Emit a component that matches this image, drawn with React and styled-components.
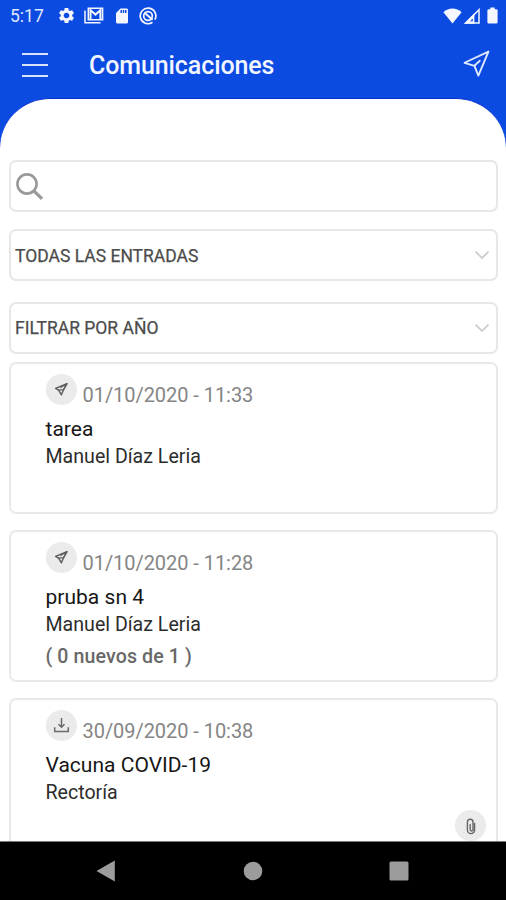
import styled, { createGlobalStyle } from "styled-components";
import { MdSettings, MdSdCard } from "react-icons/md";


const GlobalStyle = createGlobalStyle`
    * {
        box-sizing: border-box;
        margin: 0;
        padding: 0;
    }

    body {
        font-family: Roboto, "Liberation Sans", sans-serif;
        background-color: #fff;
    }

    svg {
        display: block;
        flex-shrink: 0;
    }
`;

const Screen = styled.div`
    width: 506px;
    height: 900px;
    display: flex;
    flex-direction: column;
    overflow: hidden;
    background-color: #0c4be2;
`;

const StatusBar = styled.div`
    height: 31px;
    display: flex;
    align-items: center;
    justify-content: space-between;
    padding: 0 8px 0 10px;
    color: #f4f7ff;
`;

const StatusGroup = styled.div`
    display: flex;
    align-items: center;
    gap: ${props => props.$gap};
`;

const Clock = styled.span`
    width: 38px;
    font-size: 17.5px;
    line-height: 32px;
    color: #dfe8ff;
`;

const Header = styled.header`
    height: 67px;
    display: flex;
    align-items: center;
    padding: 0 16px 0 22px;
`;

const MenuButton = styled.button`
    width: 26px;
    height: 24px;
    display: flex;
    flex-direction: column;
    justify-content: space-between;
    margin-top: 1px;
    border: none;
    background: none;
    cursor: pointer;
`;

const MenuLine = styled.span`
    width: 26px;
    height: 2px;
    background-color: #d8e2fb;
`;

const Title = styled.h1`
    flex: 1;
    margin-left: 41px;
    padding-top: 3px;
    font-size: 25px;
    font-weight: 500;
    line-height: 32px;
    letter-spacing: -0.1px;
    color: #f1f5ff;
`;

const SendButton = styled.button`
    display: flex;
    margin-top: -2px;
    border: none;
    background: none;
    cursor: pointer;
`;

const Sheet = styled.main`
    flex: 1;
    min-height: 0;
    overflow: hidden;
    display: flex;
    flex-direction: column;
    padding: 61px 8px 0 9px;
    border-top: 1px solid #0a2fd0;
    border-radius: 50px 50px 0 0;
    background-color: #fff;
`;

const Field = styled.div`
    flex-shrink: 0;
    height: 52px;
    display: flex;
    align-items: center;
    justify-content: space-between;
    margin-bottom: ${props => props.$space};
    padding: 0 6px 0 4px;
    border: 2px solid #e7e7e7;
    border-radius: 7px;
`;

const FieldLabel = styled.span`
    padding-top: 1px;
    font-size: 17.5px;
    color: #4c4c4c;
    -webkit-text-stroke: 0.25px #4c4c4c;
`;

const Card = styled.article`
    flex-shrink: 0;
    height: 152px;
    display: flex;
    flex-direction: column;
    margin-bottom: 16px;
    padding: 10px 10px 0 34.5px;
    border: 2px solid #e9e9e9;
    border-radius: 7px;
`;

const CardTop = styled.div`
    display: flex;
    gap: 6px;
    height: 40.5px;
`;

const IconCircle = styled.span`
    width: 31px;
    height: 31px;
    display: flex;
    align-items: center;
    justify-content: center;
    flex-shrink: 0;
    border-radius: 50%;
    background-color: #ebebeb;
`;

const CardDate = styled.time`
    padding-top: 6.5px;
    font-size: 20px;
    line-height: 28px;
    letter-spacing: -0.05px;
    color: #858585;
`;

const Subject = styled.h2`
    font-size: 21px;
    font-weight: 400;
    line-height: 28px;
    letter-spacing: 0.02px;
    color: #161616;
`;

const Sender = styled.p`
    font-size: 19.6px;
    line-height: 27.5px;
    color: #2c2c2c;
`;

const Replies = styled.p`
    margin-top: 4px;
    font-size: 19.6px;
    font-weight: 500;
    line-height: 30px;
    letter-spacing: 0.1px;
    color: #686868;
`;

const Attachment = styled.div`
    display: flex;
    justify-content: flex-end;
    margin-top: 4px;
`;

const NavBar = styled.nav`
    height: 59px;
    display: flex;
    align-items: center;
    justify-content: space-between;
    padding: 0 97px 0 96px;
    background-color: #000;
    border-top: 1px solid #777;
`;

function PaperPlane({ size, color, stroke }) {
    return (
        <svg width={size} height={size} viewBox="0 0 26 26" fill="none" stroke={color} strokeWidth={stroke} strokeLinejoin="round" strokeLinecap="round">
            <path d="M24.5 1.5 1.5 12.3 11 15.2 14.8 24.7Z" />
            <path d="M11 15.2 16.2 10.4" />
        </svg>
    );
}

function SentIcon() {
    return (
        <svg width="15" height="17" viewBox="0 0 15 17" fill="none" stroke="#5c5c5c" strokeWidth="1.4" strokeLinejoin="round">
            <path d="M13 2.6 1.6 7.4 4.6 9.1 7.4 13.8 9.6 8.6Z" />
            <path d="M4.6 9.1 9.6 8.6 13 2.6 6.4 6.8" strokeWidth="1.1" />
        </svg>
    );
}

function DownloadIcon() {
    return (
        <svg width="17" height="17" viewBox="0 0 17 17" fill="none" stroke="#6a6a6a" strokeWidth="1.5">
            <path d="M8.5 1V10M5.5 7.2 8.5 10.2 11.5 7.2" />
            <path d="M1.7 10.2V14.6H15.3V10.2" />
        </svg>
    );
}

function ClipIcon() {
    return (
        <svg width="12" height="18" viewBox="0 0 12 18" fill="none" stroke="#666" strokeWidth="1.4" strokeLinecap="round">
            <path d="M2.4 5V13A3.6 3.6 0 0 0 9.6 13V6.5M2.4 5A2.8 2.8 0 0 1 8 5V12.6A1.4 1.4 0 0 1 5.2 12.6V7.5" />
        </svg>
    );
}

function ChevronIcon() {
    return (
        <svg width="16" height="10" viewBox="0 0 16 10" fill="none" stroke="#cdcdcd" strokeWidth="1.8">
            <path d="M1.5 1.6 8 8 14.5 1.6" />
        </svg>
    );
}

function SearchIcon() {
    return (
        <svg width="28" height="28" viewBox="0 0 28 28" fill="none" stroke="#999" strokeWidth="2.6">
            <circle cx="12" cy="12" r="9.6" />
            <path d="M18.8 18.8 27 26.8" strokeWidth="3.2" />
        </svg>
    );
}

function MailIcon() {
    return (
        <svg width="20" height="17" viewBox="0 0 20 17" fill="none" stroke="currentColor">
            <path d="M1 3.5V15.8H16.5" strokeWidth="1.5" />
            <path d="M4.3 1.2H18.6V12.8H4.3Z" strokeWidth="1.5" />
            <path d="M6.5 12.5V3.2L11.5 7.6 16.4 3.2V12.5" strokeWidth="2" />
        </svg>
    );
}

function SyncIcon() {
    return (
        <svg width="18" height="18" viewBox="0 0 18 18" fill="none" stroke="currentColor">
            <path d="M13.5 15.3A7.8 7.8 0 1 1 15.9 12.6" strokeWidth="1.7" />
            <circle cx="9" cy="9" r="4.3" strokeWidth="1.7" />
            <path d="M5.5 5.8 13.6 12.8" strokeWidth="1.9" />
        </svg>
    );
}

function WifiIcon() {
    return (
        <svg width="19" height="16" viewBox="0 0 19 16" fill="currentColor">
            <path d="M0.4 4.2C5.5-.6 13.5-.6 18.6 4.2L9.5 15.6Z" />
        </svg>
    );
}

function SignalIcon() {
    return (
        <svg width="16" height="16" viewBox="0 0 16 16">
            <path d="M1.8 14.9H15V1.7Z" fill="none" stroke="currentColor" strokeWidth="1.5" />
            <path d="M0 15.7H10.4V5.3Z" fill="currentColor" />
            <path d="M6 13.2H8.8V10.4Z" fill="#0c4be2" />
        </svg>
    );
}

const BatteryIcon = styled(BatteryShape)`
    margin-left: 6px;
`;

function BatteryShape({ className }) {
    return (
        <svg className={className} width="11" height="17" viewBox="0 0 11 17" fill="currentColor">
            <path d="M3.3 0.5H7.7V2.2H9.3Q10.6 2.2 10.6 3.5V15.2Q10.6 16.5 9.3 16.5H1.7Q0.4 16.5 0.4 15.2V3.5Q0.4 2.2 1.7 2.2H3.3Z" />
        </svg>
    );
}

const messages = [
    { id: 1, icon: "sent", date: "01/10/2020 - 11:33", subject: "tarea", sender: "Manuel Díaz Leria" },
    { id: 2, icon: "sent", date: "01/10/2020 - 11:28", subject: "pruba sn 4", sender: "Manuel Díaz Leria", replies: "( 0 nuevos de 1 )" },
    { id: 3, icon: "received", date: "30/09/2020 - 10:38", subject: "Vacuna COVID-19", sender: "Rectoría", attachment: true },
];

function Message({ message }) {
    return (
        <Card>
            <CardTop>
                <IconCircle>
                    {message.icon === "sent" ? <SentIcon /> : <DownloadIcon />}
                </IconCircle>
                <CardDate>{message.date}</CardDate>
            </CardTop>
            <Subject>{message.subject}</Subject>
            <Sender>{message.sender}</Sender>
            {message.replies && <Replies>{message.replies}</Replies>}
            {message.attachment && (
                <Attachment>
                    <IconCircle><ClipIcon /></IconCircle>
                </Attachment>
            )}
        </Card>
    );
}

export default function App() {
    return (
        <>
            <GlobalStyle />
            <Screen>
                <StatusBar>
                    <StatusGroup $gap="8.5px">
                        <Clock>5:17</Clock>
                        <MdSettings size={19} />
                        <MailIcon />
                        <MdSdCard size={18} />
                        <SyncIcon />
                    </StatusGroup>
                    <StatusGroup $gap="1.5px">
                        <WifiIcon />
                        <SignalIcon />
                        <BatteryIcon />
                    </StatusGroup>
                </StatusBar>

                <Header>
                    <MenuButton aria-label="Menú">
                        <MenuLine />
                        <MenuLine />
                        <MenuLine />
                    </MenuButton>
                    <Title>Comunicaciones</Title>
                    <SendButton aria-label="Enviar">
                        <PaperPlane size={27} color="#dfe8ff" stroke={1.8} />
                    </SendButton>
                </Header>

                <Sheet>
                    <Field $space="17px">
                        <SearchIcon />
                    </Field>
                    <Field $space="20.5px">
                        <FieldLabel>TODAS LAS ENTRADAS</FieldLabel>
                        <ChevronIcon />
                    </Field>
                    <Field $space="8.5px">
                        <FieldLabel>FILTRAR POR AÑO</FieldLabel>
                        <ChevronIcon />
                    </Field>

                    {messages.map(message => (
                        <Message message={message} key={message.id} />
                    ))}
                </Sheet>

                <NavBar>
                    <svg width="20" height="22" viewBox="0 0 20 22" fill="#9c9c9c">
                        <path d="M0.5 11 18.8 0.5V21.5Z" />
                    </svg>
                    <svg width="20" height="20" viewBox="0 0 20 20" fill="#9c9c9c">
                        <circle cx="10" cy="10" r="9.3" />
                    </svg>
                    <svg width="20" height="20" viewBox="0 0 20 20" fill="#9c9c9c">
                        <rect x="0.5" y="0.5" width="19" height="19" rx="1.5" />
                    </svg>
                </NavBar>
            </Screen>
        </>
    );
}
